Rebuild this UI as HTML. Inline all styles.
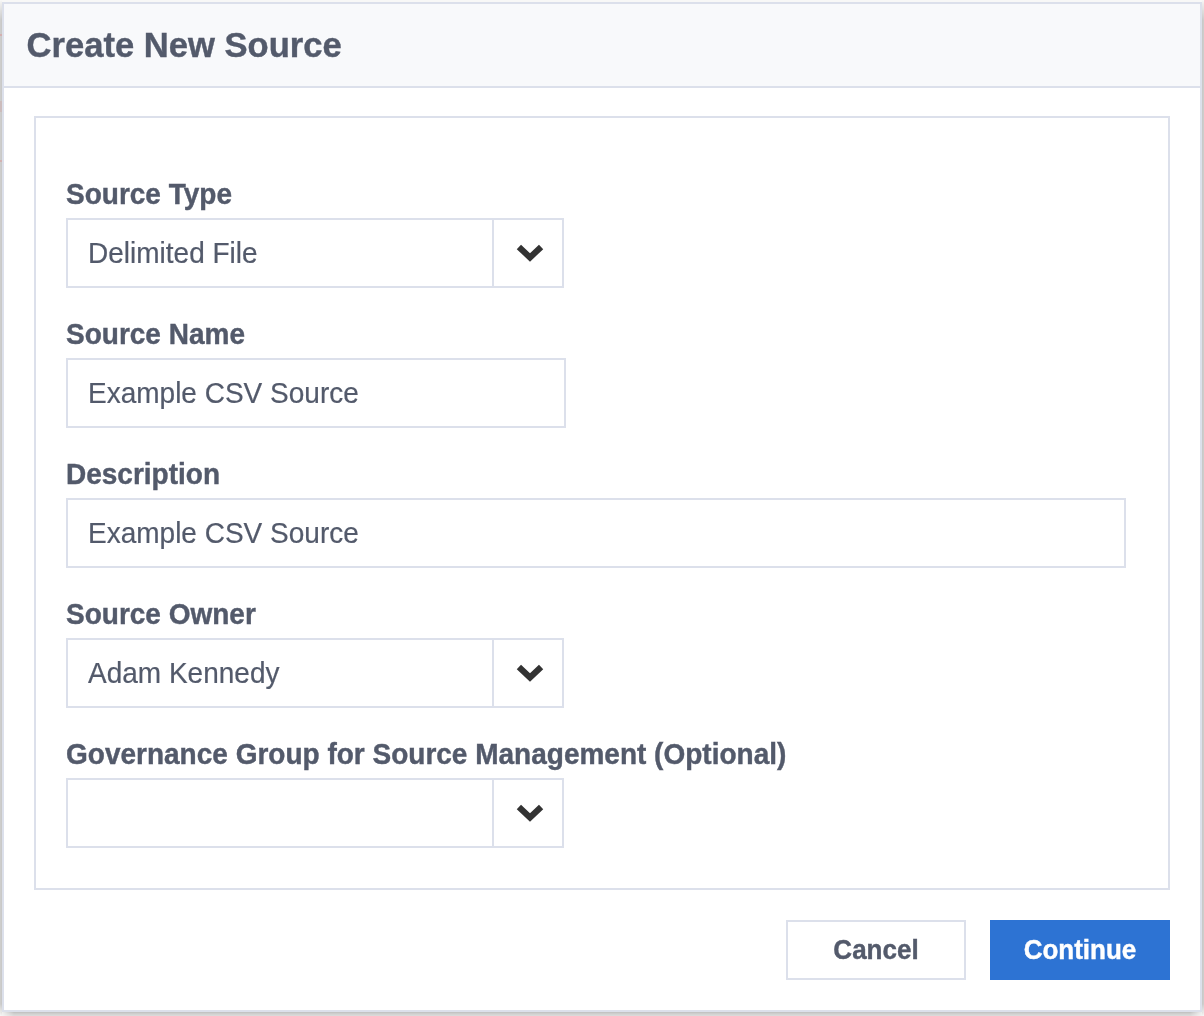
<!DOCTYPE html>
<html>
<head>
<meta charset="utf-8">
<style>
html, body { margin: 0; padding: 0; }
body {
  width: 1204px; height: 1016px; overflow: hidden; position: relative;
  background: #f8f8f7;
  font-family: "Liberation Sans", sans-serif;
  color: #535a6b;
}
.abs { position: absolute; box-sizing: border-box; }
.shl { left: 0; top: 0; width: 2px; height: 1016px;
  background: linear-gradient(to right, rgba(0,0,0,0.16), rgba(0,0,0,0.2));
  -webkit-mask-image: linear-gradient(to bottom, transparent 0px, rgba(0,0,0,0.25) 4px, #000 20px, #000 1004px, transparent 1016px); }
.shr { left: 1202px; top: 0; width: 2px; height: 1016px;
  background: linear-gradient(to right, rgba(0,0,0,0.2), rgba(0,0,0,0.16));
  -webkit-mask-image: linear-gradient(to bottom, transparent 0px, rgba(0,0,0,0.25) 4px, #000 20px, #000 1004px, transparent 1016px); }
.shb { left: 0; top: 1012px; width: 1204px; height: 4px;
  background: linear-gradient(to bottom, rgba(0,0,0,0.21) 0px, rgba(0,0,0,0.21) 1px, rgba(0,0,0,0.173) 1px, rgba(0,0,0,0.173) 2px, rgba(0,0,0,0.145) 2px, rgba(0,0,0,0.145) 3px, rgba(0,0,0,0.121) 3px);
  -webkit-mask-image: linear-gradient(to right, transparent 0px, #000 14px, #000 1190px, transparent 1204px); }
.modal {
  left: 2px; top: 2px; width: 1200px; height: 1010px;
  border: 2px solid #dce0eb; background: #fff;
}
.header {
  left: 4px; top: 4px; width: 1196px; height: 84px;
  background: #f8f9fb; border-bottom: 2px solid #dce0eb;
}
.title {
  left: 26.5px; top: 25px; font-size: 34.6px; font-weight: bold;
  line-height: 40px; white-space: nowrap; color: #535a6b;
  transform: scaleY(1.035); transform-origin: 0 32px;
  -webkit-text-stroke: 0.4px #535a6b;
}
.box {
  left: 34px; top: 116px; width: 1136px; height: 774px;
  border: 2px solid #dce0eb;
}
.label {
  left: 66px; font-size: 28px; font-weight: bold; line-height: 32px;
  white-space: nowrap; color: #535a6b;
  transform: scaleY(1.063); transform-origin: 0 25px;
  -webkit-text-stroke: 0.4px #535a6b;
}
.field {
  left: 66px; height: 70px;
  border: 2px solid #dce0eb; background: #fff;
}
.val {
  position: absolute; left: 20px; top: 1px; line-height: 66px; font-size: 28px;
  white-space: nowrap; color: #535a6b;
  transform: scaleY(1.08); transform-origin: 0 42px;
  -webkit-text-stroke: 0.2px #535a6b;
}
.sep { position: absolute; top: 0; left: 424px; width: 2px; height: 66px; background: #dce0eb; }
.chev { position: absolute; left: 426px; top: 0; }
.btn {
  top: 920px; width: 180px; height: 60px;
  font-size: 26px; font-weight: bold; text-align: center; white-space: nowrap;
}
.btn span { position: absolute; left: 0; right: 0; line-height: 30px; transform: scaleY(1.06); transform-origin: 50% 24px; }
.cancel span { top: 13px; -webkit-text-stroke: 0.4px #535a6b; }
.continue span { top: 15px; -webkit-text-stroke: 0.4px #fff; }
.cancel { left: 786px; border: 2px solid #dce0eb; background: #fff; color: #535a6b; line-height: 56px; }
.continue { left: 990px; background: #2d73d3; color: #fff; line-height: 60px; }
</style>
</head>
<body>
<div class="abs shl"></div>
<div class="abs shr"></div>
<div class="abs shb"></div>
<div class="abs" style="left:0;top:34px;width:2px;height:2px;background:#d3b0b0"></div>
<div class="abs" style="left:0;top:101px;width:2px;height:11px;background:#ccbcbc"></div>
<div class="abs" style="left:0;top:160px;width:2px;height:2px;background:#d3b2b2"></div>
<div class="abs modal"></div>
<div class="abs header"></div>
<div class="abs title">Create New Source</div>
<div class="abs box"></div>

<div class="abs label" style="top:179px">Source Type</div>
<div class="abs field" style="top:218px;width:498px">
  <div class="val">Delimited File</div>
  <div class="sep"></div>
  <svg class="chev" width="68" height="66" viewBox="0 0 68 66"><polyline points="24.9,26.9 36,37.4 47.1,26.9" fill="none" stroke="#333" stroke-width="6.2" stroke-linejoin="miter" stroke-linecap="butt"/></svg>
</div>

<div class="abs label" style="top:319px">Source Name</div>
<div class="abs field" style="top:358px;width:500px">
  <div class="val">Example CSV Source</div>
</div>

<div class="abs label" style="top:459px">Description</div>
<div class="abs field" style="top:498px;width:1060px">
  <div class="val">Example CSV Source</div>
</div>

<div class="abs label" style="top:599px">Source Owner</div>
<div class="abs field" style="top:638px;width:498px">
  <div class="val">Adam Kennedy</div>
  <div class="sep"></div>
  <svg class="chev" width="68" height="66" viewBox="0 0 68 66"><polyline points="24.9,26.9 36,37.4 47.1,26.9" fill="none" stroke="#333" stroke-width="6.2" stroke-linejoin="miter" stroke-linecap="butt"/></svg>
</div>

<div class="abs label" style="top:739px">Governance Group for Source Management (Optional)</div>
<div class="abs field" style="top:778px;width:498px">
  <div class="sep"></div>
  <svg class="chev" width="68" height="66" viewBox="0 0 68 66"><polyline points="24.9,26.9 36,37.4 47.1,26.9" fill="none" stroke="#333" stroke-width="6.2" stroke-linejoin="miter" stroke-linecap="butt"/></svg>
</div>

<div class="abs btn cancel"><span>Cancel</span></div>
<div class="abs btn continue"><span>Continue</span></div>
</body>
</html>
